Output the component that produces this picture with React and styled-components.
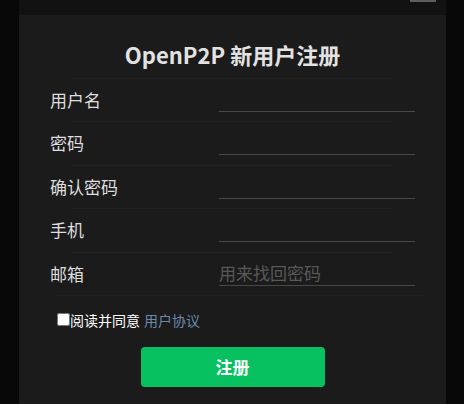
import React from 'react';
import styled, { createGlobalStyle } from 'styled-components';

const GlobalStyle = createGlobalStyle`
  html, body {
    margin: 0;
    padding: 0;
    background: #080808;
    font-family: "Noto Sans CJK SC", "Noto Sans", sans-serif;
  }
`;

const Page = styled.div`
  width: 427px;
  height: 404px;
  margin-left: 19px;
  background: #1b1b1b;
  overflow: hidden;
`;

const TopBar = styled.div`
  height: 15px;
  background: #121212;
  display: flex;
  justify-content: flex-end;
  padding-right: 10px;
`;

const MenuEdge = styled.div`
  width: 26px;
  height: 2px;
  background: #5e5e5e;
`;

const Title = styled.h1`
  margin: 0;
  height: 63px;
  padding-top: 24px;
  box-sizing: border-box;
  text-align: center;
  font-size: 22px;
  font-weight: 700;
  line-height: 30px;
  color: #e2e2e2;
`;

const Form = styled.div`
  display: flex;
  flex-direction: column;
`;

const Row = styled.div`
  height: 43.4px;
  box-sizing: border-box;
  display: grid;
  grid-template-columns: 169px 196px;
  align-items: start;
  padding-left: 31px;
  background:
    linear-gradient(to right, transparent 53px, #222 53px, #222 373px, transparent 373px) top / 100% 1px no-repeat;
`;

const Label = styled.label`
  font-size: 17px;
  line-height: 24px;
  color: #dedede;
  margin-top: 10px;
`;

const Input = styled.input`
  margin-top: 8px;
  height: 25px;
  padding: 0;
  border: none;
  border-bottom: 1px solid #484848;
  background: transparent;
  font-family: inherit;
  font-size: 17px;
  color: #ddd;
  outline: none;

  &::placeholder {
    color: #585858;
  }
`;

const Divider = styled.div`
  height: 1px;
  margin: 0 23px 0 38px;
  background: #212121;
`;

const Agree = styled.label`
  display: flex;
  align-items: center;
  margin: 16px 0 0 38px;
  font-size: 14px;
  line-height: 16px;
  color: #fff;
`;

const Check = styled.input`
  width: 13px;
  height: 13px;
  margin: 0;
`;

const Link = styled.a`
  margin-left: 4px;
  color: #6b89ad;
  text-decoration: none;
`;

const Submit = styled.button`
  display: block;
  margin: 19px auto 0;
  width: 184px;
  height: 40px;
  border: none;
  border-radius: 4px;
  background: #07c160;
  color: #fff;
  font-family: inherit;
  font-size: 17px;
  font-weight: 700;
`;

const fields = [
  { label: '用户名', type: 'text' },
  { label: '密码', type: 'password' },
  { label: '确认密码', type: 'password' },
  { label: '手机', type: 'text' },
  { label: '邮箱', type: 'text', placeholder: '用来找回密码' },
];

export default function App() {
  return (
    <>
      <GlobalStyle />
      <Page>
        <TopBar>
          <MenuEdge />
        </TopBar>
        <Title>OpenP2P 新用户注册</Title>
        <Form>
          {fields.map((f) => (
            <Row key={f.label}>
              <Label>{f.label}</Label>
              <Input type={f.type} placeholder={f.placeholder} />
            </Row>
          ))}
        </Form>
        <Divider />
        <Agree>
          <Check type="checkbox" />
          阅读并同意
          <Link href="#">用户协议</Link>
        </Agree>
        <Submit>注册</Submit>
      </Page>
    </>
  );
}
